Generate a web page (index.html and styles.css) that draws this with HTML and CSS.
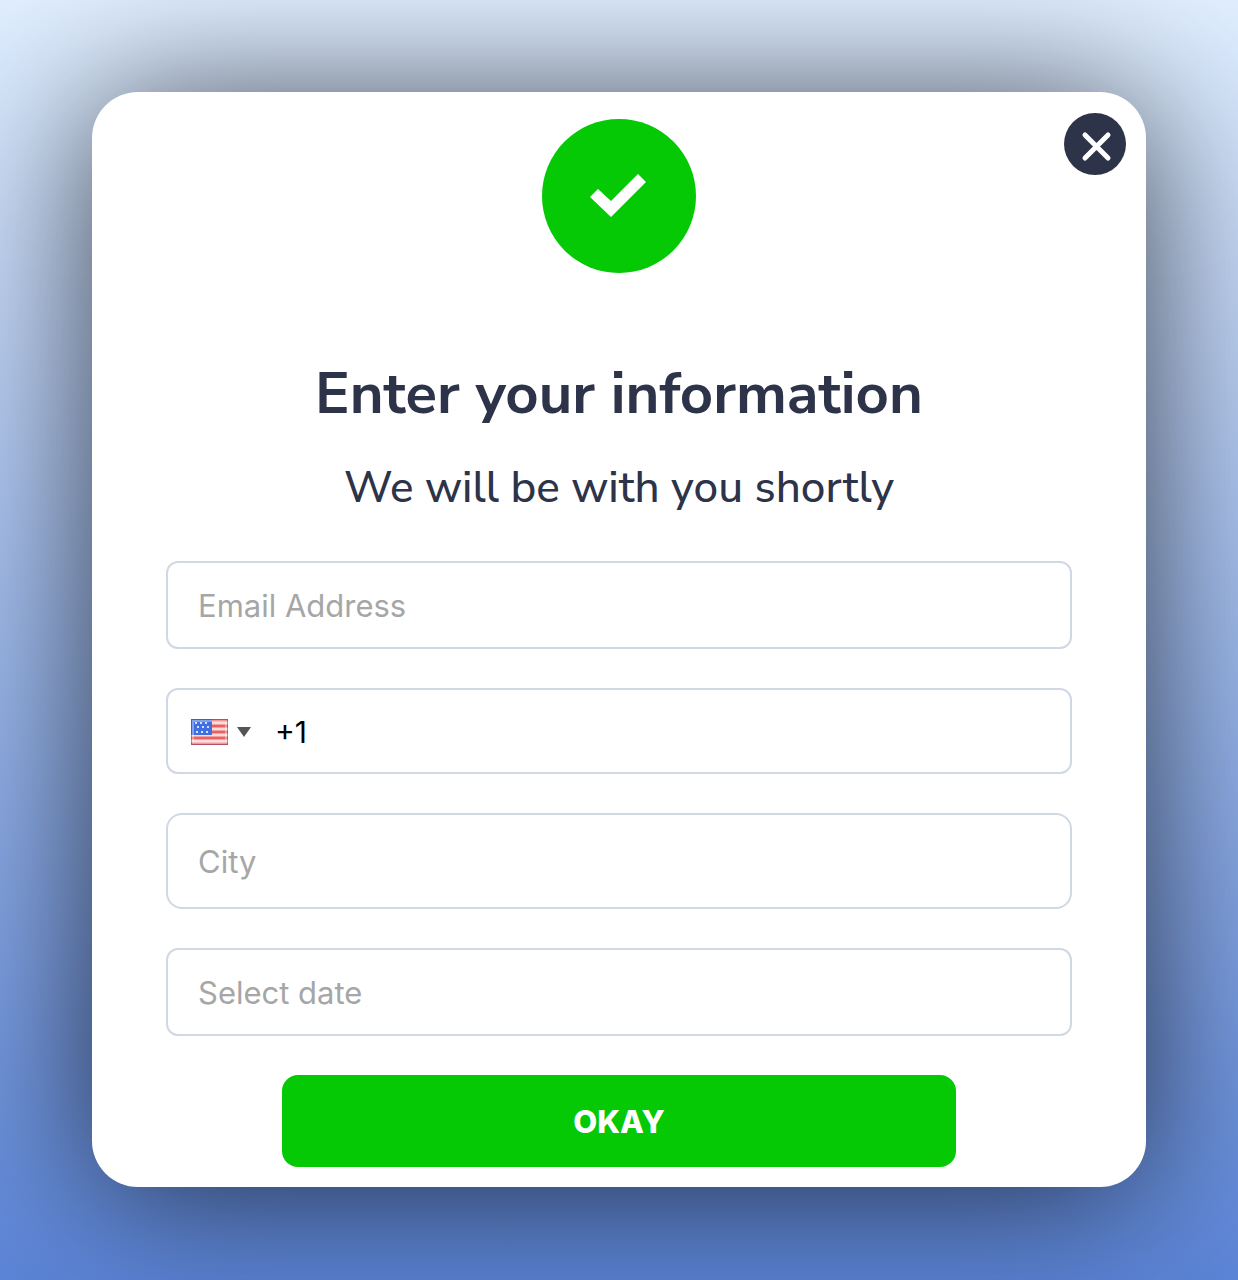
FILE: index.html
```html
<!DOCTYPE html>
<html lang="en">
<head>
<meta charset="utf-8">
<meta name="viewport" content="width=device-width, initial-scale=1">
<title>Enter your information</title>
<link rel="stylesheet" href="styles.css">
</head>
<body>
<main class="card" role="dialog" aria-labelledby="title">
  <button class="close" type="button" aria-label="Close">
    <svg viewBox="0 0 62 62" aria-hidden="true"><path d="M21 22 L44 45 M44 22 L21 45"/></svg>
  </button>
  <svg class="badge" viewBox="0 0 154 154" aria-hidden="true">
    <circle cx="77" cy="77" r="77"/>
    <path d="M48 78 L56 70 L69 82 L96 55 L104 63 L69 98 Z"/>
  </svg>
  <h1 class="title" id="title">Enter your information</h1>
  <p class="subtitle">We will be with you shortly</p>
  <form class="form">
    <input class="field" type="email" placeholder="Email Address" aria-label="Email Address">
    <div class="field phone">
      <button class="country" type="button" aria-label="Country: United States">
        <svg class="flag" viewBox="0 0 37 26" aria-hidden="true">
          <path fill="#f9dede" d="M0 0h37v26H0z"/>
          <path stroke="#ee6060" stroke-width="3" d="M0 1h37M0 7h37M0 13h37M0 19h37M0 25h37"/>
          <path fill="#3f6fe0" d="M0 0h21v16H0z"/>
          <path stroke="#fff" stroke-width="2" stroke-dasharray="2 3" opacity=".8" d="M4 4h15M6 8h12M5 13h14"/>
          <path fill="none" stroke="#fff" stroke-width="2" opacity=".35" d="M2 2h33v22h-33z"/>
          <path fill="none" stroke="#7c3d66" stroke-width="1" opacity=".5" d="M.5 .5h36v25H.5z"/>
        </svg>
        <svg class="caret" viewBox="0 0 14 10" aria-hidden="true"><path d="M0 0h14L7 10z"/></svg>
      </button>
      <input class="number" type="tel" value="+1" aria-label="Phone number">
    </div>
    <input class="field field-tall" type="text" placeholder="City" aria-label="City">
    <input class="field" type="text" placeholder="Select date" aria-label="Select date">
    <button class="submit" type="submit">OKAY</button>
  </form>
</main>
</body>
</html>
```
FILE: styles.css
```css
* { box-sizing: border-box; }

body {
  margin: 0;
  min-height: 100vh;
  padding: 92px;
  background: linear-gradient(#e0eeff, #5c85d8);
  font-family: Inter, "Liberation Sans", sans-serif;
  color: #2d3348;
}

.card {
  position: relative;
  display: flex;
  flex-direction: column;
  align-items: center;
  padding: 27px 74px 20px;
  border-radius: 46px;
  background: #fff;
  box-shadow: 0 8px 150px rgba(0, 0, 0, .68);
}

.close {
  position: absolute;
  top: 21px;
  right: 20px;
  width: 62px;
  height: 62px;
  padding: 0;
  border: 0;
  border-radius: 50%;
  background: #2d3348;
}

.close svg {
  display: block;
  fill: none;
  stroke: #fff;
  stroke-width: 5;
  stroke-linecap: round;
}

.badge {
  width: 154px;
  height: 154px;
  fill: #04c904;
}

.badge path { fill: #fff; }

.title,
.subtitle {
  margin: 0;
  font-family: "Nunito Sans", Nunito, "Open Sans", sans-serif;
  text-align: center;
}

.title {
  margin-top: 81px;
  font-size: 58px;
  font-weight: 700;
  line-height: 80px;
}

.subtitle {
  margin-top: 24px;
  font-size: 44px;
  font-weight: 500;
  line-height: 60px;
}

.form {
  display: flex;
  flex-direction: column;
  gap: 39px;
  width: 100%;
  margin-top: 43px;
}

.field {
  width: 100%;
  height: 88px;
  padding: 0 30px;
  border: 2px solid #d0d8e4;
  border-radius: 12px;
  background: #fff;
  font-family: inherit;
  font-size: 31px;
}

.field::placeholder {
  color: #a6a6a6;
  opacity: 1;
}

.field-tall {
  height: 96px;
  border-radius: 16px;
}

.phone {
  display: flex;
  align-items: center;
  gap: 24px;
  height: 86px;
  padding: 2px 23px 0;
}

.country {
  display: flex;
  align-items: center;
  gap: 9px;
  padding: 0;
  border: 0;
  background: none;
}

.flag {
  width: 37px;
  height: 26px;
}

.caret {
  width: 14px;
  height: 10px;
  fill: #555;
}

.number {
  flex: 1;
  min-width: 0;
  padding: 0;
  border: 0;
  font: inherit;
  font-size: 30px;
  color: #000;
}

.submit {
  align-self: center;
  width: 674px;
  max-width: 100%;
  height: 92px;
  border: 0;
  border-radius: 16px;
  background: #04c904;
  color: #fff;
  font: 800 31px Inter, "Liberation Sans", sans-serif;
}
```
